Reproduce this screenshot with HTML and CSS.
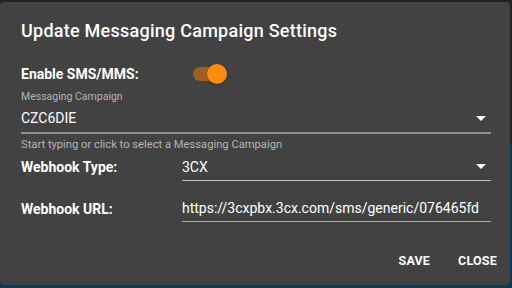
FILE: index.html
```html
<!DOCTYPE html>
<html>
<head>
<meta charset="utf-8">
<link rel="stylesheet" href="styles.css">
</head>
<body>
<div class="dialog">
  <h1 class="title">Update Messaging Campaign Settings</h1>
  <div class="content">
    <div class="row toggle-row">
      <span class="label">Enable SMS/MMS:</span>
      <span class="switch"><span class="track"></span><span class="thumb"></span></span>
    </div>
    <div class="field campaign">
      <div class="small-label">Messaging Campaign</div>
      <div class="select">
        <span class="value">CZC6DIE</span>
        <svg class="arrow" width="10" height="5" viewBox="0 0 10 5"><path d="M0 0 L10 0 L5 5 Z" fill="#fff"/></svg>
      </div>
      <div class="helper">Start typing or click to select a Messaging Campaign</div>
    </div>
    <div class="row field-row">
      <span class="label">Webhook Type:</span>
      <div class="select inline">
        <span class="value">3CX</span>
        <svg class="arrow" width="10" height="5" viewBox="0 0 10 5"><path d="M0 0 L10 0 L5 5 Z" fill="#fff"/></svg>
      </div>
    </div>
    <div class="row field-row url-row">
      <span class="label">Webhook URL:</span>
      <div class="select inline thin">
        <span class="value">https://3cxpbx.3cx.com/sms/generic/076465fd</span>
      </div>
    </div>
  </div>
  <div class="actions">
    <span class="btn">SAVE</span>
    <span class="btn">CLOSE</span>
  </div>
</div>
</body>
</html>
```
FILE: styles.css
```css
html, body {
  margin: 0;
  padding: 0;
}
body {
  width: 512px;
  height: 288px;
  background: linear-gradient(#232323 0 50%, #0c3a58 50%);
  font-family: Roboto, "Liberation Sans", sans-serif;
  color: #fff;
  overflow: hidden;
}
.dialog {
  margin-top: 2px;
  width: 510px;
  height: 283px;
  background: #424242;
  border-radius: 4px;
  box-sizing: border-box;
  display: flex;
  flex-direction: column;
}
.title {
  margin: 0;
  padding: 17px 21px 0;
  font-size: 18px;
  font-weight: 500;
  line-height: 24px;
  letter-spacing: 0.25px;
}
.content {
  padding: 0 19px 0 21px;
  display: flex;
  flex-direction: column;
}
.row {
  display: flex;
  align-items: center;
}
.label {
  font-size: 14px;
  font-weight: 700;
  width: 161px;
  flex: none;
}
.toggle-row {
  margin-top: 19px;
  height: 24px;
}
.switch {
  position: relative;
  width: 36px;
  height: 20px;
  margin-left: 11px;
}
.track {
  position: absolute;
  left: 0;
  top: 3px;
  width: 30px;
  height: 14px;
  border-radius: 7px;
  background: #9f5f22;
}
.thumb {
  position: absolute;
  left: 14px;
  top: 0;
  width: 20px;
  height: 20px;
  border-radius: 50%;
  background: #fb8c0c;
  box-shadow: 0 1px 2px rgba(0,0,0,0.3);
}
.campaign {
  margin-top: 4px;
}
.small-label {
  font-size: 10.5px;
  color: #b4b4b4;
  line-height: 14px;
}
.select {
  display: flex;
  align-items: center;
  justify-content: space-between;
  height: 30px;
  border-bottom: 2px solid #8f8f8f;
  box-sizing: border-box;
  padding-right: 5px;
}
.select.inline {
  flex: 1;
  height: 28px;
  border-bottom: 1px solid #bcbcbc;
}
.select.thin {
  height: 27px;
  border-bottom: 1px solid #a9a9a9;
}
.value {
  font-size: 14px;
  color: #fff;
}
.arrow {
  display: block;
}
.helper {
  font-size: 11.2px;
  color: #b4b4b4;
  line-height: 14px;
  margin-top: 4px;
}
.field-row {
  margin-top: 1px;
}
.url-row {
  margin-top: 14px;
}
.actions {
  margin-top: auto;
  display: flex;
  justify-content: flex-end;
  gap: 28px;
  padding: 0 13px 17px 0;
}
.btn {
  font-size: 12.5px;
  font-weight: 700;
  letter-spacing: 0.2px;
}
```
